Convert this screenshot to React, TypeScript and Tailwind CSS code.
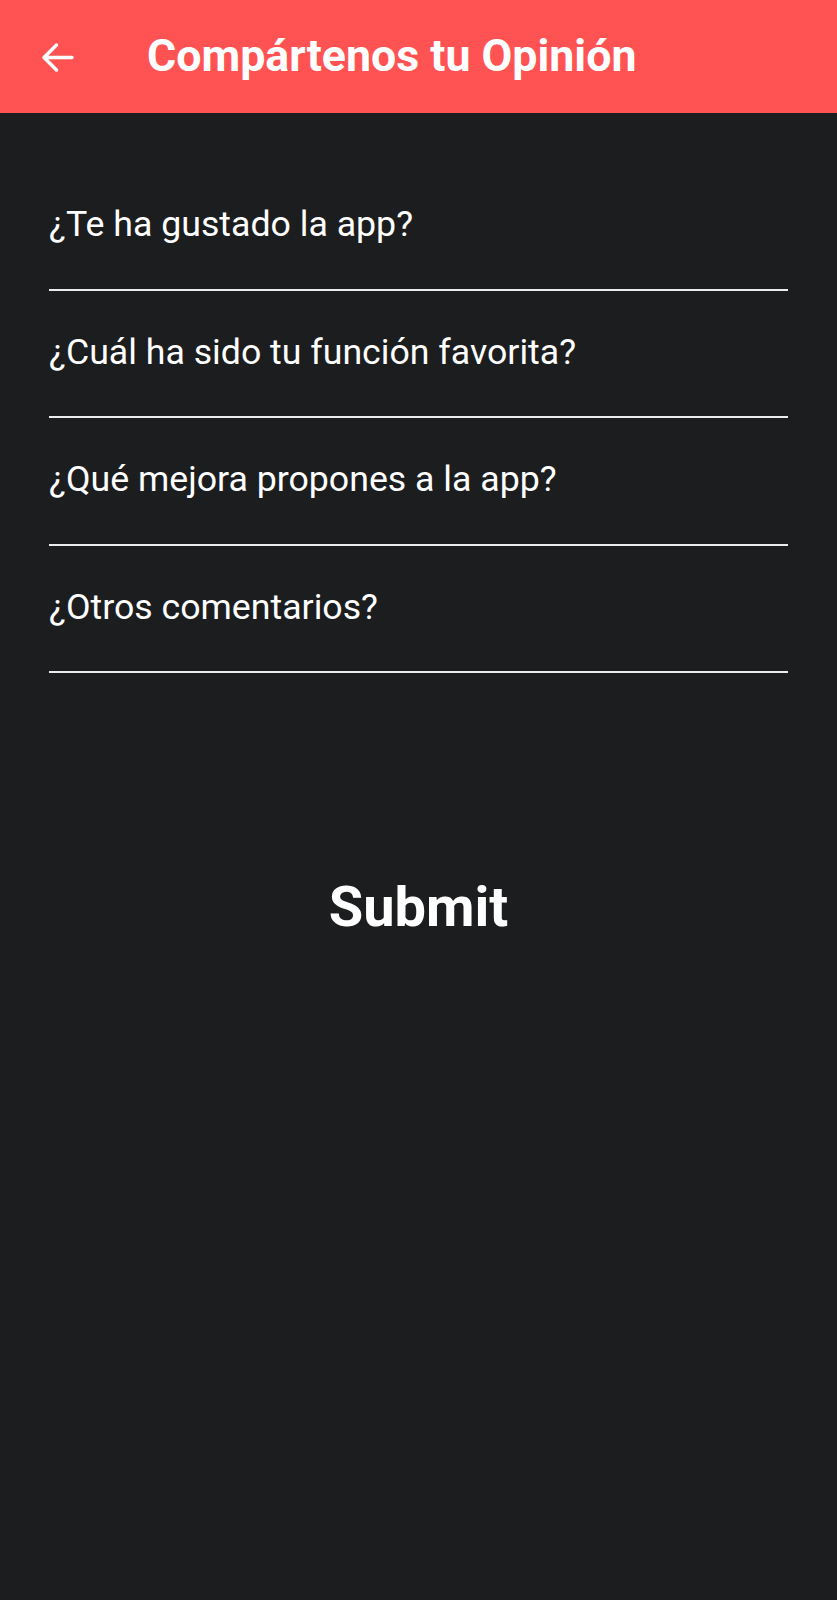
import React from "react";

const questions = [
  "¿Te ha gustado la app?",
  "¿Cuál ha sido tu función favorita?",
  "¿Qué mejora propones a la app?",
  "¿Otros comentarios?",
];

export default function App() {
  return (
    <div
      className="min-h-[1600px] w-full bg-[#1c1d1f] text-white"
      style={{ fontFamily: "Roboto, 'Noto Sans', sans-serif" }}
    >
      <header className="flex h-[113px] items-center bg-[#ff5353]">
        <div className="ml-[41px] mt-[1px] flex h-[33px] w-[33px] items-center justify-center">
          <svg width="33" height="33" viewBox="0 0 33 33" fill="none">
            <path
              d="M31 16.5H3M15.5 4L3 16.5 15.5 29"
              stroke="white"
              strokeWidth="3.5"
              strokeLinecap="round"
              strokeLinejoin="round"
            />
          </svg>
        </div>
        <h1 className="ml-[73px] text-[44.7px] font-bold leading-none">
          Compártenos tu Opinión
        </h1>
      </header>
      <main className="px-[49px] pt-[50px]">
        {questions.map((q) => (
          <div
            key={q}
            className="box-border h-[127.5px] border-b-2 border-[#ececec] pt-[40px]"
          >
            <div className="text-[35.7px] leading-[42px]">{q}</div>
          </div>
        ))}
        <div className="mt-[202px] flex justify-center">
          <button className="text-[56px] font-bold leading-[64px]">Submit</button>
        </div>
      </main>
    </div>
  );
}
